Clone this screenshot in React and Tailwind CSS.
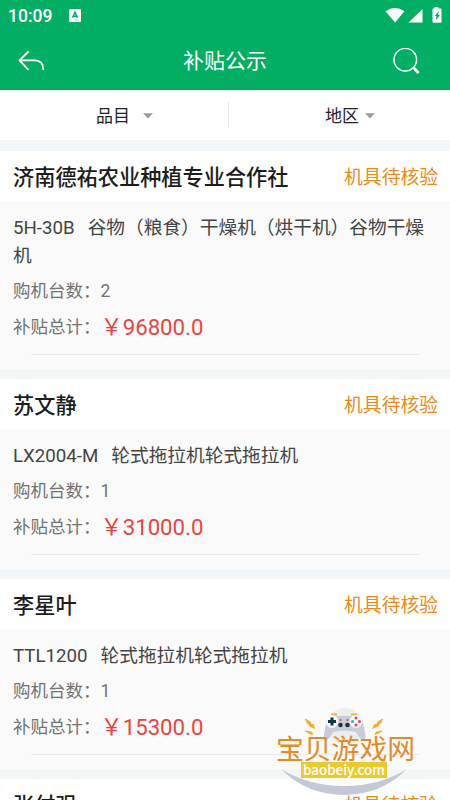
import React from "react";

const records = [
  {
    id: 1,
    owner: "济南德祐农业种植专业合作社",
    model: "5H-30B",
    product: "谷物（粮食）干燥机（烘干机）谷物干燥机",
    count: 2,
    total: "96800.0",
  },
  {
    id: 2,
    owner: "苏文静",
    model: "LX2004-M",
    product: "轮式拖拉机轮式拖拉机",
    count: 1,
    total: "31000.0",
  },
  {
    id: 3,
    owner: "李星叶",
    model: "TTL1200",
    product: "轮式拖拉机轮式拖拉机",
    count: 1,
    total: "15300.0",
  },
  {
    id: 4,
    owner: "张付强",
  },
];

function StatusBar() {
  return (
    <div className="flex h-8 items-center pl-2 pr-2">
      <span className="text-[17.5px] leading-8 font-medium">10:09</span>
      <svg className="ml-[17px] -mt-0.5 h-[13px] w-3" viewBox="0 0 12 13">
        <rect width="12" height="13" rx="1" fill="#fff" />
        <path
          d="M3.5 8.7 6 3l2.5 5.7M4.3 7.2h3.4"
          fill="none"
          stroke="#02ad64"
          strokeWidth="1.5"
        />
        <path d="M6 11h4" stroke="#9fdcc0" strokeWidth="1" />
      </svg>
      {/* Wifi, signal, battery */}
      <svg className="-mt-0.5 ml-auto h-4 w-[57px]" viewBox="0 0 57 16">
        <path d="M.5 4.2Q10 -2.4 19.5 4.2L10 15.6Z" fill="#fff" />
        <path d="M37.5 2v13.5H23.5Z" fill="#fff" />
        <path
          d="M49.5 0h4v1.5h2.2q.8 0 .8.8v12.5q0 .9-.9.9h-7.2q-.9 0-.9-.9V2.3q0-.8.8-.8h1.200Z"
          fill="#fff"
        />
        <path d="M54 4 49.7 9h1.8l-.8 4.6L55 8h-2Z" fill="#02ad64" />
      </svg>
    </div>
  );
}

function NavBar() {
  return (
    <div className="flex h-[58px] items-center pl-[18px] pr-[30px]">
      <svg
        className="h-5 w-[27px]"
        viewBox="0 0 27 20"
        fill="none"
        stroke="#fff"
        strokeWidth="1.8"
        strokeLinecap="round"
        strokeLinejoin="round"
      >
        <path d="M10 1 1.5 9.3 10 18.3M1.5 9.3H17q8 .2 8.3 8.9" />
      </svg>
      <h1 className="flex-1 pl-3 text-center text-[21px] leading-none">
        补贴公示
      </h1>
      <svg
        className="h-[27px] w-[27px]"
        viewBox="0 0 27 27"
        fill="none"
        stroke="#fff"
        strokeLinecap="round"
      >
        <circle cx="12.3" cy="11.7" r="11.3" strokeWidth="1.4" />
        <path d="m20.1 19.5 1.7 1.7" strokeWidth="1.5" />
        <path d="m21.6 20.8 3.2 3.4" strokeWidth="2.8" />
      </svg>
    </div>
  );
}

function Caret() {
  return (
    <svg className="h-1.5 w-2.5" viewBox="0 0 10 6">
      <path d="M0 .3h10L5 5.5Z" fill="#9b9b9b" />
    </svg>
  );
}

function FilterBar() {
  return (
    <div className="flex h-[50px] items-center bg-white text-[17px] leading-none text-[#222]">
      <button className="flex w-[228px] items-center gap-[13px] pt-0.5 pl-24">
        品目
        <Caret />
      </button>
      <div className="h-[26px] w-px bg-[#e2e2e2]" />
      <button className="flex flex-1 items-center gap-1.5 pt-0.5 pl-24">
        地区
        <Caret />
      </button>
    </div>
  );
}

function RecordCard({ record }) {
  return (
    <section className="bg-[#fafafa] pb-[14px]">
      <div className="flex h-[50px] items-center justify-between bg-white pt-[3px] pl-[13px] pr-3">
        <h2 className="text-[21.2px] leading-none font-medium text-[#1c1c1c]">
          {record.owner}
        </h2>
        <span className="pt-0.5 text-[18.8px] leading-none text-[#ea8a1c]">
          机具待核验
        </span>
      </div>
      {record.model && (
        <>
          <div className="px-[13px] pt-[13px]">
            <p className="text-[18.7px] leading-7 text-[#444]">
              <span className="mr-[13px]">{record.model}</span>
              {record.product}
            </p>
            <p className="flex h-[43px] items-center text-[17.5px] text-[#727272]">
              购机台数：<span>{record.count}</span>
            </p>
            <p className="flex h-[29px] items-center text-[17.5px] text-[#727272]">
              补贴总计：
              <span className="flex text-[22.2px] text-[#e94343]">
                ￥<span>{record.total}</span>
              </span>
            </p>
          </div>
          <div className="mx-[31px] mt-3 h-px bg-[#e8e8e8]" />
        </>
      )}
    </section>
  );
}

function Watermark() {
  return (
    <div className="absolute top-[706px] left-[276px] w-[142px]">
      <svg className="absolute top-0 left-0 h-[94px] w-[142px]" viewBox="0 0 142 94">
        <circle cx="69" cy="20" r="18" fill="#ededed" />
        <path
          d="M5 63Q33 80 68 80Q104 80 131 63Q105 89 68 89Q31 89 5 63Z"
          fill="#c5c8d6"
        />
        {/* Gamepad */}
        <path d="M55 8.5h6M75 8.5h6" stroke="#efb631" strokeWidth="2" />
        <path
          d="M56 9.5Q68 10.5 80 9.5Q86 10 87 17L89.5 29Q90 35 86 34Q83 32 80 26Q69 23 57 26Q54 32 51 34Q47 35 48 29L50 17Q51 10 56 9.5Z"
          fill="#c9cbd8"
        />
        <circle cx="56" cy="15.5" r="6.5" fill="#f7f7fa" />
        <circle cx="80" cy="15.5" r="6.5" fill="#f7f7fa" />
        <path d="M56 11.5v8M52 15.5h8" stroke="#173642" strokeWidth="3" />
        <circle cx="64.5" cy="19" r="2.3" fill="#173642" />
        <circle cx="71.5" cy="19" r="2.3" fill="#173642" />
        <circle cx="64.5" cy="14" r="1" fill="#e04462" />
        <circle cx="71.5" cy="14" r="1" fill="#e04462" />
        <circle cx="80" cy="12" r="1.5" fill="#e04462" />
        <circle cx="80" cy="19" r="1.5" fill="#e04462" />
        <circle cx="76.5" cy="15.500" r="1.5" fill="#3b9fbd" />
        <circle cx="83.5" cy="15.5" r="1.5" fill="#e04462" />
        {/* Sparks */}
        <path
          d="m29.5 13 5 3 .5 2.5h2.500l1 4-5-2.5-.5-2.200H31.500ZM29 25l7 1 .5 2.500-4-1.500ZM106.500 13l-5 3-.5 2.500H98.500l-2 4 6-2.500.5-2.200h1.500ZM106 25l-6 1-1 2.500 4-1.500Z"
          fill="#eeae2b"
          stroke="#eeae2b"
          strokeWidth=".8"
        />
      </svg>
      <div className="relative pt-7 text-[27.8px] leading-[32px] whitespace-nowrap text-[#e28a2c]">
        宝贝游戏网
      </div>
      <div className="relative mt-[-4px] ml-[25px] flex h-4 w-[86px] items-center justify-center bg-[#e8cb2e] font-['Noto_Sans_CJK_SC',sans-serif] text-[13.4px] leading-none font-medium text-white">
        baobeiy.com
      </div>
    </div>
  );
}

export default function App() {
  return (
    <div className="relative h-[800px] w-[450px] overflow-hidden bg-[#f2f6f8] font-[Roboto,'Noto_Sans_CJK_SC',sans-serif]">
      <header className="bg-[#02ad64] text-white">
        <StatusBar />
        <NavBar />
      </header>
      <FilterBar />
      <main className="mt-[11px] flex flex-col gap-2.5">
        {records.map((record) => (
          <RecordCard key={record.id} record={record} />
        ))}
      </main>
      <Watermark />
    </div>
  );
}
